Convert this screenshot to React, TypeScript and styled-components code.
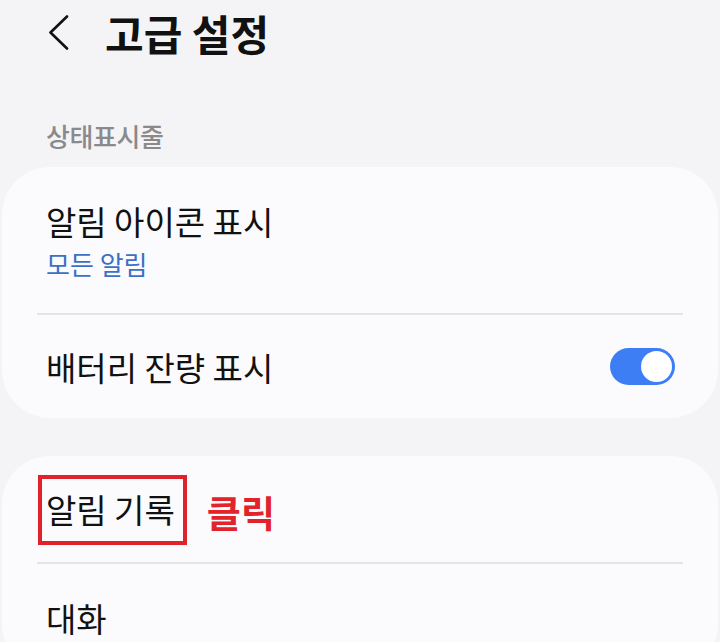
import React from 'react';
import styled, { createGlobalStyle } from 'styled-components';

const GlobalStyle = createGlobalStyle`
  html, body {
    margin: 0;
    padding: 0;
    background: #f4f4f6;
  }
  body {
    font-family: 'Noto Sans CJK KR', 'Noto Sans', sans-serif;
    color: #111;
  }
`;

const Page = styled.div`
  width: 720px;
  height: 642px;
  overflow: hidden;
  background: #f4f4f6;
`;

const Header = styled.header`
  display: flex;
  align-items: center;
  height: 66px;
  padding-left: 47px;
  gap: 34px;
`;

const Title = styled.h1`
  margin: 0;
  font-size: 42px;
  font-weight: 700;
  line-height: 50px;
  color: #111;
`;

const SectionLabel = styled.div`
  margin: 54px 0 15px 46px;
  font-size: 26px;
  line-height: 32px;
  font-weight: 500;
  letter-spacing: -0.4px;
  color: #8a8a8c;
`;

const Card = styled.section<{ $gap?: number }>`
  margin: 0 2px ${p => p.$gap ?? 0}px;
  background: #fbfbfd;
  border-radius: 48px;
  overflow: hidden;
`;

const Row = styled.div<{ $height: number }>`
  display: flex;
  align-items: center;
  justify-content: space-between;
  min-height: ${p => p.$height}px;
  padding: 0 43px 0 44px;
  box-sizing: border-box;
`;

const TextBlock = styled.div`
  display: flex;
  flex-direction: column;
`;

const ItemTitle = styled.span`
  font-size: 33px;
  line-height: 44px;
  color: #111;
`;

const ItemSub = styled.span`
  margin-top: 4px;
  font-size: 26px;
  line-height: 34px;
  color: #3a70c6;
`;

const Divider = styled.hr`
  margin: 0 35px;
  border: none;
  height: 2px;
  background: #e4e4e7;
`;

const Toggle = styled.div<{ $on: boolean }>`
  position: relative;
  width: 65px;
  height: 37px;
  border-radius: 19px;
  background: ${p => (p.$on ? '#3d7ef4' : '#c8c8cc')};

  &::after {
    content: '';
    position: absolute;
    top: 3px;
    ${p => (p.$on ? 'right: 3px;' : 'left: 3px;')}
    width: 31px;
    height: 31px;
    border-radius: 50%;
    background: #fff;
  }
`;

const Annotated = styled.div`
  display: flex;
  align-items: center;
  gap: 32px;
`;

const Boxed = styled.span`
  position: relative;
  display: inline-flex;

  &::after {
    content: '';
    position: absolute;
    top: -12px;
    bottom: -14px;
    left: -8px;
    right: -12px;
    border: 4px solid #e0222b;
  }
`;

const ClickNote = styled.span`
  font-size: 37px;
  line-height: 44px;
  font-weight: 700;
  color: #e3232c;
  padding-top: 6px;
`;

const BackIcon = () => (
  <svg width="24" height="36" viewBox="0 0 24 36" fill="none">
    <path d="M20 1.5 L3.5 17.5 L20 33.5" stroke="#111" strokeWidth="2.6" strokeLinecap="round" strokeLinejoin="round" />
  </svg>
);

const App = () => {
  return (
    <Page>
      <GlobalStyle />
      <Header>
        <BackIcon />
        <Title>고급 설정</Title>
      </Header>

      <SectionLabel>상태표시줄</SectionLabel>

      <Card $gap={38}>
        <Row $height={146}>
          <TextBlock>
            <ItemTitle>알림 아이콘 표시</ItemTitle>
            <ItemSub>모든 알림</ItemSub>
          </TextBlock>
        </Row>
        <Divider />
        <Row $height={103}>
          <ItemTitle>배터리 잔량 표시</ItemTitle>
          <Toggle $on />
        </Row>
      </Card>

      <Card>
        <Row $height={106}>
          <Annotated>
            <Boxed>
              <ItemTitle>알림 기록</ItemTitle>
            </Boxed>
            <ClickNote>클릭</ClickNote>
          </Annotated>
        </Row>
        <Divider />
        <Row $height={108}>
          <ItemTitle>대화</ItemTitle>
        </Row>
      </Card>
    </Page>
  );
};

export default App;
